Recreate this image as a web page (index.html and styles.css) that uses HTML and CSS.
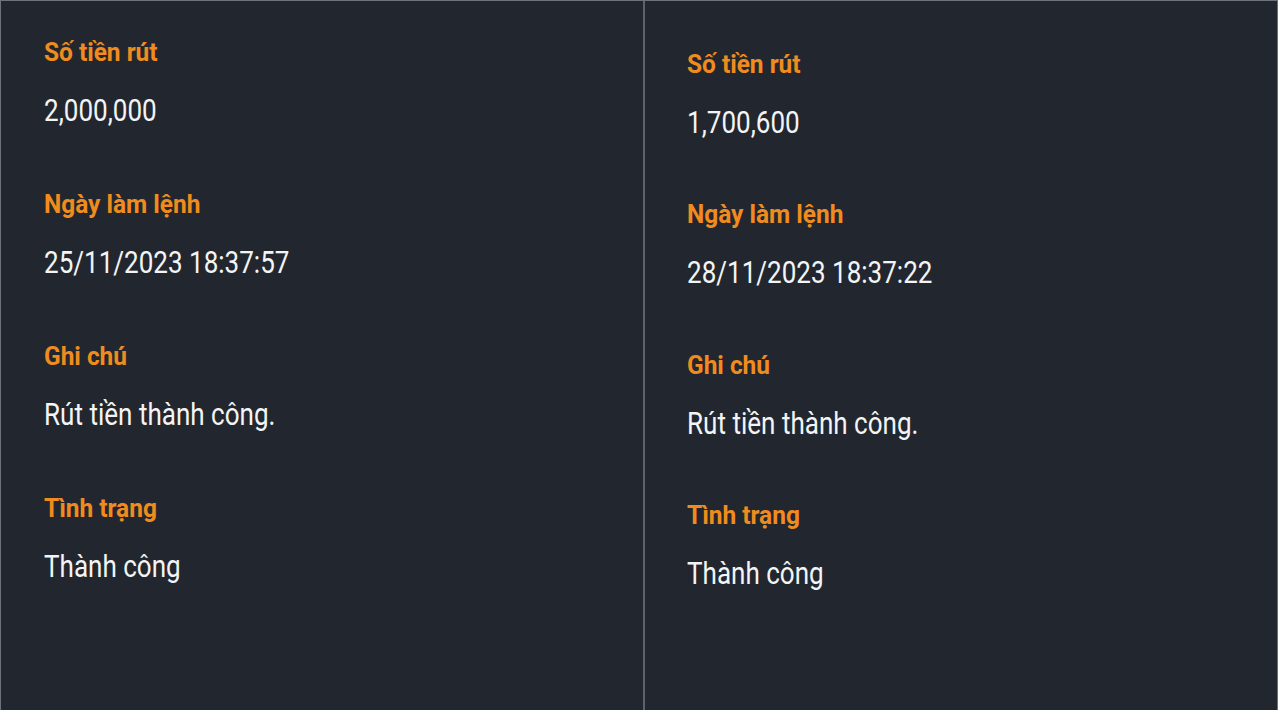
FILE: index.html
```html
<!DOCTYPE html>
<html lang="vi">
<head>
<meta charset="utf-8">
<title>Lịch sử rút tiền</title>
<link rel="stylesheet" href="styles.css">
</head>
<body>
<main class="screen">
  <section class="panel panel-left">
    <div class="item">
      <div class="label"><span class="label-text">Số tiền rút</span></div>
      <div class="value"><span class="value-text">2,000,000</span></div>
    </div>
    <div class="item">
      <div class="label"><span class="label-text">Ngày làm lệnh</span></div>
      <div class="value"><span class="value-text">25/11/2023 18:37:57</span></div>
    </div>
    <div class="item">
      <div class="label"><span class="label-text">Ghi chú</span></div>
      <div class="value"><span class="value-text">Rút tiền thành công.</span></div>
    </div>
    <div class="item">
      <div class="label"><span class="label-text">Tình trạng</span></div>
      <div class="value"><span class="value-text">Thành công</span></div>
    </div>
  </section>
  <div class="divider"></div>
  <section class="panel panel-right">
    <div class="item">
      <div class="label"><span class="label-text">Số tiền rút</span></div>
      <div class="value"><span class="value-text">1,700,600</span></div>
    </div>
    <div class="item">
      <div class="label"><span class="label-text">Ngày làm lệnh</span></div>
      <div class="value"><span class="value-text">28/11/2023 18:37:22</span></div>
    </div>
    <div class="item">
      <div class="label"><span class="label-text">Ghi chú</span></div>
      <div class="value"><span class="value-text">Rút tiền thành công.</span></div>
    </div>
    <div class="item">
      <div class="label"><span class="label-text">Tình trạng</span></div>
      <div class="value"><span class="value-text">Thành công</span></div>
    </div>
  </section>
</main>
</body>
</html>
```
FILE: styles.css
```css
* { box-sizing: border-box; }

html, body {
  margin: 0;
  padding: 0;
  height: 100%;
  background: #22272f;
}

body {
  font-family: Roboto, "Noto Sans", "Liberation Sans", sans-serif;
  overflow: hidden;
}

.screen {
  display: flex;
  height: 710px;
  width: 1278px;
  background: #22272f;
  border-top: 1px solid #6e737b;
  border-left: 1px solid #6e737b;
  border-right: 1px solid #6e737b;
}

.panel {
  display: flex;
  flex-direction: column;
}

.panel-left {
  width: 642px;
  padding: 36px 0 0 43px;
  gap: 60px;
}

.panel-right {
  flex: 1;
  padding: 47.5px 0 0 42px;
  gap: 58.5px;
}

.divider {
  width: 2px;
  background: #5b636c;
}

.item {
  display: flex;
  flex-direction: column;
}

.label {
  font-size: 26px;
  line-height: 30px;
  font-weight: 700;
  color: #f08c1e;
  white-space: nowrap;
}

.label-text {
  display: inline-block;
  transform: scaleX(0.94);
  transform-origin: left center;
}

.value {
  margin-top: 26px;
  font-size: 31px;
  line-height: 36px;
  font-weight: 400;
  color: #f3f4f5;
  white-space: nowrap;
}

.value-text {
  display: inline-block;
  transform: scaleX(0.84);
  transform-origin: left center;
}
```
